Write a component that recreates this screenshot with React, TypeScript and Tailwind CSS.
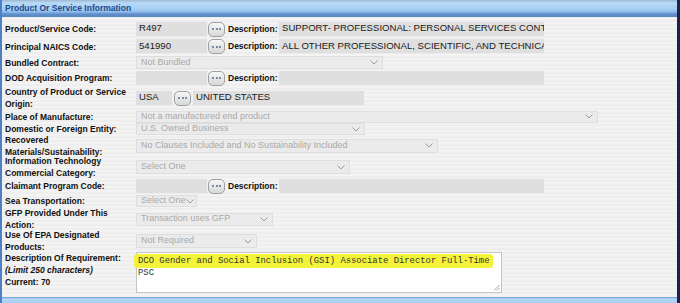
import React from "react";

const LBL = "text-[8.5px] font-bold leading-[12px] text-[#111] w-[131px] shrink-0";

function Dots() {
  return (
    <div className="w-[17px] h-[15px] shrink-0 rounded-[5px] border border-[#a0a0a0] bg-[linear-gradient(180deg,#f7f7f7,#d8d8d8)] flex items-center justify-center gap-[1.5px]">
      <span className="w-[2px] h-[2px] rounded-full bg-[#5a6e90]" />
      <span className="w-[2px] h-[2px] rounded-full bg-[#5a6e90]" />
      <span className="w-[2px] h-[2px] rounded-full bg-[#5a6e90]" />
    </div>
  );
}

function Input({ w, value }: { w: string; value?: string }) {
  return (
    <div className={`${w} h-[15px] shrink-0 bg-[#dfdfdf] border-b border-[#ececec] flex items-center pl-[3px] text-[9.6px] text-[#1a1a1a] overflow-hidden whitespace-nowrap`}>
      {value}
    </div>
  );
}

function Select({ w, value, h = "h-[13px]" }: { w: string; value: string; h?: string }) {
  return (
    <div className={`${w} ${h} shrink-0 bg-[#ebebeb] border border-[#dedede] flex items-center justify-between pl-[4px] pr-[4px] text-[9px] text-[#a9a9a9] whitespace-nowrap overflow-hidden`}>
      <span>{value}</span>
      <svg width="8" height="5" viewBox="0 0 8 5" className="shrink-0">
        <path d="M0.5 0.5 L4 4 L7.5 0.5" fill="none" stroke="#9a9a9a" strokeWidth="1" />
      </svg>
    </div>
  );
}

function DescLabel() {
  return <div className="text-[8.5px] font-bold text-[#111] w-[51px] shrink-0 ml-[3px]">Description:</div>;
}

function Row({ h, children, start }: { h: string; children: React.ReactNode; start?: boolean }) {
  return <div className={`flex ${start ? "items-start" : "items-center"} ${h}`}>{children}</div>;
}

export default function App() {
  return (
    <div
      className="w-[680px] h-[303px] overflow-hidden flex flex-col bg-[repeating-linear-gradient(180deg,#eeeeee_0px,#eeeeee_2px,#f3f3f3_2px,#f3f3f3_4px)] border-l-2 border-l-[#4d80c4] border-r-[3px] border-r-[#1c2150]"
      style={{ fontFamily: '"Liberation Sans", Arial, sans-serif' }}
    >
      <div className="h-[17px] shrink-0 flex items-center pl-[3px] bg-[linear-gradient(180deg,#9fb7cf_0px,#b9dbfa_3px,#a6cdf3_9px,#8fbbea_12px,#5f8fcc_14px,#5a86bf_17px)]">
        <span className="text-[8.5px] font-bold text-[#1d4a8c]">Product Or Service Information</span>
      </div>

      <div className="flex flex-col pl-[3px] pt-[3px]">
        <Row h="h-[18px]">
          <div className={LBL}>Product/Service Code:</div>
          <Input w="w-[71px]" value="R497" />
          <div className="w-px" />
          <Dots />
          <DescLabel />
          <Input w="w-[265px]" value="SUPPORT- PROFESSIONAL: PERSONAL SERVICES CONTRACTS" />
        </Row>
        <Row h="h-[17px]">
          <div className={LBL}>Principal NAICS Code:</div>
          <Input w="w-[71px]" value="541990" />
          <div className="w-px" />
          <Dots />
          <DescLabel />
          <Input w="w-[265px]" value="ALL OTHER PROFESSIONAL, SCIENTIFIC, AND TECHNICAL SERVICES" />
        </Row>
        <Row h="h-[15px]">
          <div className={LBL}>Bundled Contract:</div>
          <Select w="w-[247px]" value="Not Bundled" />
        </Row>
        <Row h="h-[16px]">
          <div className={LBL}>DOD Acquisition Program:</div>
          <Input w="w-[71px]" />
          <div className="w-px" />
          <Dots />
          <DescLabel />
          <Input w="w-[265px]" />
        </Row>
        <Row h="h-[24px]">
          <div className={LBL}>Country of Product or Service Origin:</div>
          <Input w="w-[36px]" value="USA" />
          <div className="w-[2px]" />
          <Dots />
          <div className="w-[2px]" />
          <Input w="w-[171px]" value="UNITED STATES" />
        </Row>
        <Row h="h-[13px]">
          <div className={LBL}>Place of Manufacture:</div>
          <Select w="w-[462px]" value="Not a manufactured end product" h="h-[12px]" />
        </Row>
        <Row h="h-[12px]">
          <div className={LBL}>Domestic or Foreign Entity:</div>
          <Select w="w-[229px]" value="U.S. Owned Business" h="h-[12px]" />
        </Row>
        <Row h="h-[21px]">
          <div className={LBL}>Recovered Materials/Sustainability:</div>
          <Select w="w-[302px]" value="No Clauses Included and No Sustainability Included" h="h-[14px]" />
        </Row>
        <Row h="h-[22px]">
          <div className={LBL}>Information Technology Commercial Category:</div>
          <Select w="w-[214px]" value="Select One" h="h-[14px]" />
        </Row>
        <Row h="h-[16px]">
          <div className={LBL}>Claimant Program Code:</div>
          <Input w="w-[71px]" />
          <div className="w-px" />
          <Dots />
          <DescLabel />
          <Input w="w-[265px]" />
        </Row>
        <Row h="h-[14px]">
          <div className={LBL}>Sea Transportation:</div>
          <Select w="w-[61px]" value="Select One" h="h-[12px]" />
        </Row>
        <Row h="h-[22px]">
          <div className={LBL}>GFP Provided Under This Action:</div>
          <Select w="w-[137px]" value="Transaction uses GFP" h="h-[13px]" />
        </Row>
        <Row h="h-[22px]">
          <div className={LBL}>Use Of EPA Designated Products:</div>
          <Select w="w-[121px]" value="Not Required" h="h-[14px]" />
        </Row>
        <Row h="h-[42px]" start>
          <div className={LBL}>
            Description Of Requirement:
            <br />
            <i>(Limit 250 characters)</i>
            <br />
            Current: 70
          </div>
          <div className="relative w-[366px] h-[41px] bg-white border border-[#c4c4c4] pl-[1px] pt-[2px] text-[8.9px] leading-[12px] text-[#333]" style={{ fontFamily: '"Liberation Mono", "DejaVu Sans Mono", monospace' }}>
            <div>
              <span className="bg-[#f3f33a] -ml-[4px] pl-[4px] pr-[3px] py-[2px] rounded-[3px]">DCO Gender and Social Inclusion (GSI) Associate Director Full-Time</span>
            </div>
            <div>PSC</div>
            <svg width="7" height="7" viewBox="0 0 7 7" className="absolute right-[1px] bottom-[1px]">
              <path d="M6.5 1 L1 6.5 M6.5 4 L4 6.5" stroke="#888" strokeWidth="0.8" />
            </svg>
          </div>
        </Row>
      </div>

      <div className="flex-1" />
      <div className="h-[6px] shrink-0 bg-[linear-gradient(180deg,#6f9bd0_0px,#b6d8f7_2px,#a6cdf3_6px)]" />
    </div>
  );
}
